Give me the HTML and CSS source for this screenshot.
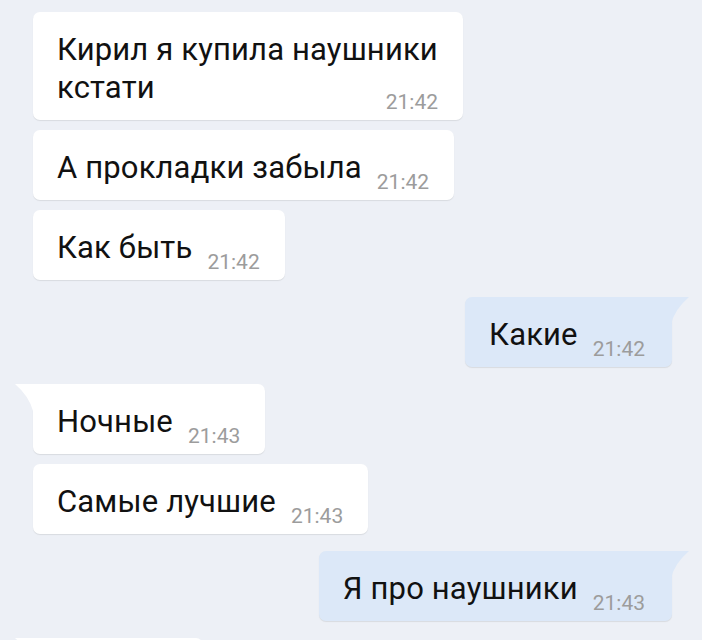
FILE: index.html
```html
<!DOCTYPE html>
<html lang="ru">
<head>
    <meta charset="UTF-8">
    <meta name="viewport" content="width=device-width, initial-scale=1.0">
    <title>Диалог</title>
    <link rel="stylesheet" href="styles.css">
</head>
<body>
    <div class="chat">
        <div class="msg in">Кирил я купила наушники кстати<span class="time">21:42</span></div>
        <div class="msg in">А прокладки забыла<span class="time">21:42</span></div>
        <div class="msg in">Как быть<span class="time">21:42</span></div>

        <div class="msg out first">Какие<span class="time">21:42</span></div>

        <div class="msg in first">Ночные<span class="time">21:43</span></div>
        <div class="msg in">Самые лучшие<span class="time">21:43</span></div>

        <div class="msg out first">Я про наушники<span class="time">21:43</span></div>

        <!-- next message, only its top edge is on screen -->
        <div class="msg in first stub"></div>
    </div>
</body>
</html>
```

FILE: styles.css
```css
body {
    margin: 0;
    height: 640px;
    overflow: hidden;
    background-color: #edf0f6;
    font-family: Roboto, "Noto Sans", Arial, sans-serif;
}

.chat {
    display: flex;
    flex-direction: column;
    padding: 12px 30px 0 33px;
}

.msg {
    position: relative;
    align-self: flex-start;
    max-width: 381px;
    padding: 19px 25px 13px 24px;
    background-color: #fff;
    border-radius: 7px;
    box-shadow: 0 1px 1px rgba(0, 0, 0, 0.09);
    color: #111;
    font-size: 31px;
    letter-spacing: 0.15px;
    line-height: 38px;
    margin-top: 10px;
}

.msg:first-child {
    margin-top: 0;
}

.msg.first {
    margin-top: 17px;
}

.msg.out {
    align-self: flex-end;
    padding-right: 27px;
    background-color: #dce8f8;
}

.msg.stub {
    width: 121px;
    height: 38px;
}

.time {
    float: right;
    margin: 23px 0 -9px 15px;
    font-size: 21px;
    letter-spacing: 0;
    line-height: 20px;
    color: #9c9c9c;
}

/* tails on the first bubble of a group */
.msg.first::before {
    content: "";
    position: absolute;
    top: 0;
    width: 18px;
    height: 27px;
    background-color: inherit;
}

.msg.in.first {
    border-top-left-radius: 0;
}

.msg.in.first::before {
    left: -18px;
    clip-path: path('M18 0 L0 0 Q14 12 18 27 Z');
}

.msg.out.first {
    border-top-right-radius: 0;
}

.msg.out.first::before {
    right: -17px;
    clip-path: path('M0 0 L18 0 Q4 12 0 27 Z');
}
```
